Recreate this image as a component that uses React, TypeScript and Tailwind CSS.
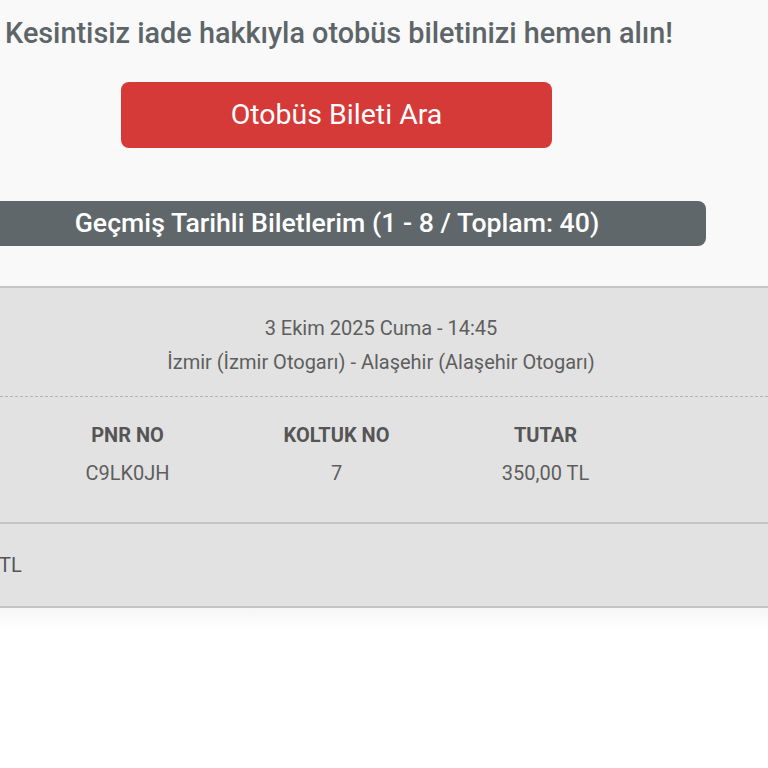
import React from "react";

export default function App() {
  const font = { fontFamily: "Roboto, 'Noto Sans', sans-serif" };
  return (
    <div className="w-[768px] h-[768px] overflow-hidden bg-white relative" style={font}>
      <div className="bg-[#f9f9f9]">
        <div className="ml-[-30px] w-[738px] flex flex-col items-center">
          <div className="pt-[14px] h-[50px] text-[28.8px] leading-[38px] font-medium text-[#5d6569] whitespace-nowrap">
            Kesintisiz iade hakkıyla otobüs biletinizi hemen alın!
          </div>
          <div className="mt-[32px] ml-[-5px] w-[431px] h-[66px] rounded-[8px] bg-[#d63a38] flex items-center justify-center text-white text-[28.5px]">
            Otobüs Bileti Ara
          </div>
          <div className="mt-[53px] ml-[-4px] w-[738px] h-[45px] rounded-[8px] bg-[#5f676b] flex items-center justify-center text-white text-[26.7px] font-medium whitespace-nowrap">
            Geçmiş Tarihli Biletlerim (1 - 8 / Toplam: 40)
          </div>
        </div>
        <div className="h-[40px]" />
      </div>
      <div className="border-t-2 border-b-2 border-[#c4c4c4] bg-[#e2e2e2]">
        <div className="flex flex-col items-center ml-[-6px] w-[774px] pt-[23px] pb-[17px] text-[20px] text-[#5e5e5e] whitespace-nowrap">
          <div className="leading-[34px]">3 Ekim 2025 Cuma - 14:45</div>
          <div className="leading-[34px]">İzmir (İzmir Otogarı) - Alaşehir (Alaşehir Otogarı)</div>
        </div>
        <div className="border-t border-dashed border-[#b4b4b4]" />
        <div className="flex pl-[23px] pt-[24px] pb-[35px] text-[20px] text-[#5e5e5e]">
          {[
            ["PNR NO", "C9LK0JH"],
            ["KOLTUK NO", "7"],
            ["TUTAR", "350,00 TL"],
          ].map(([h, v]) => (
            <div key={h} className="w-[209px] flex flex-col items-center whitespace-nowrap">
              <div className="font-bold leading-[28px] text-[#555]">{h}</div>
              <div className="leading-[28px] mt-[10px]">{v}</div>
            </div>
          ))}
        </div>
        <div className="border-t-2 border-[#c4c4c4]" />
        <div className="h-[82px] flex items-center text-[20px] text-[#555]">
          <span className="ml-[-1px]">TL</span>
        </div>
      </div>
      <div className="h-[22px] bg-gradient-to-b from-[#f6f6f6] to-white" />
    </div>
  );
}
